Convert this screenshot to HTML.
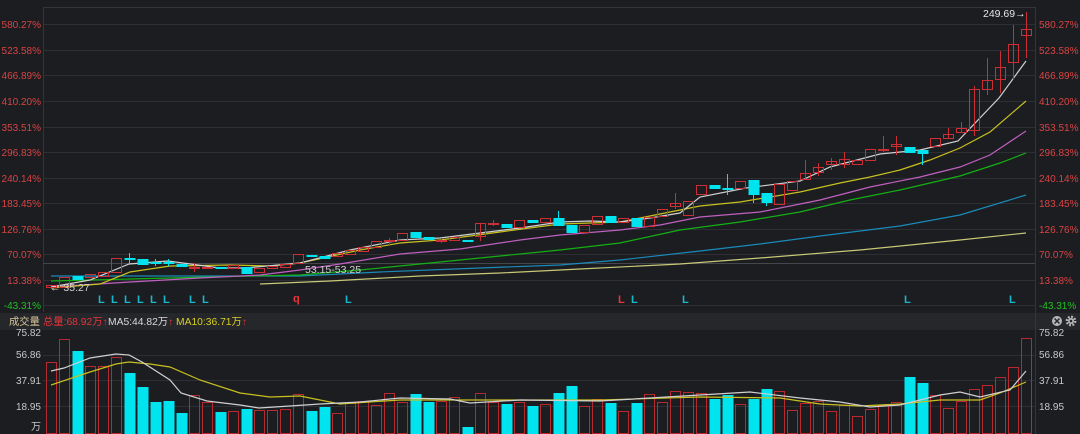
<!DOCTYPE html>
<html><head><meta charset="utf-8"><style>
html,body{margin:0;padding:0;background:#1c1d21;width:1080px;height:434px;overflow:hidden}
svg{display:block}
text{font-family:"Liberation Sans","Noto Sans CJK SC",sans-serif}
</style></head><body>
<svg id="s" width="1080" height="434" xmlns="http://www.w3.org/2000/svg">
<rect width="1080" height="434" fill="#1c1d21"/>
<rect x="0" y="313" width="1080" height="17" fill="#26272b"/>
<g id="grid" stroke="#2e2f34" stroke-width="1"></g>
<line x1="43.5" y1="7" x2="43.5" y2="312" stroke="#34353a"/>
<line x1="1035.5" y1="7" x2="1035.5" y2="434" stroke="#34353a"/>
<line x1="43" y1="7.5" x2="1036" y2="7.5" stroke="#34353a"/>
<line x1="43" y1="263.5" x2="1035" y2="263.5" stroke="#45464b"/>
<g id="labels" font-size="10"></g>
<g id="ma" fill="none" stroke-width="1.2"></g>
<g id="candles"></g>
<g id="vol"></g>
<g id="vma" fill="none" stroke-width="1.2"></g>
<text x="983" y="17" font-size="10.5" fill="#e6e6e6">249.69→</text>
<text x="305" y="273" font-size="10.5" fill="#d0d0d0">53.15-53.25</text>
<text x="50" y="291" font-size="10.5" fill="#d0d0d0">← 35.27</text>
<g font-size="11" font-weight="bold">
<text x="98" y="303" fill="#17b8d0">L</text><text x="111" y="303" fill="#17b8d0">L</text><text x="124" y="303" fill="#17b8d0">L</text><text x="137" y="303" fill="#17b8d0">L</text><text x="150" y="303" fill="#17b8d0">L</text><text x="163" y="303" fill="#17b8d0">L</text><text x="189" y="303" fill="#17b8d0">L</text><text x="202" y="303" fill="#17b8d0">L</text>
<text x="293" y="302" fill="#e8343b">q</text><text x="345" y="303" fill="#17b8d0">L</text><text x="618" y="303" fill="#e8343b">L</text><text x="631" y="303" fill="#17b8d0">L</text><text x="682" y="303" fill="#17b8d0">L</text><text x="904" y="303" fill="#17b8d0">L</text><text x="1009" y="303" fill="#17b8d0">L</text>
</g>
<g font-size="10.3">
<text x="9" y="325" fill="#d8c89a">成交量</text>
<text x="43" y="325" fill="#e8343b">总量:68.92万↑</text>
<text x="108" y="325" fill="#d8d8d8">MA5:44.82万<tspan fill="#e8343b">↑</tspan></text>
<text x="176" y="325" fill="#d8d020">MA10:36.71万<tspan fill="#e8343b">↑</tspan></text>
</g>
<circle cx="1057" cy="321" r="5" fill="#b8b8b8"/><path d="M1054.5 318.5l5 5M1059.5 318.5l-5 5" stroke="#26272b" stroke-width="1.5"/>
<circle cx="1071" cy="321" r="4.2" fill="none" stroke="#b8b8b8" stroke-width="2.4" stroke-dasharray="1.8 1.5"/><circle cx="1071" cy="321" r="3" fill="#b8b8b8"/><circle cx="1071" cy="321" r="1.3" fill="#26272b"/>
</svg>
<script>
var NS="http://www.w3.org/2000/svg";
function el(p,t,a){var e=document.createElementNS(NS,t);for(var k in a)e.setAttribute(k,a[k]);p.appendChild(e);return e;}
var grid=document.getElementById('grid'),lab=document.getElementById('labels');
var gl=["580.27%","523.58%","466.89%","410.20%","353.51%","296.83%","240.14%","183.45%","126.76%","70.07%","13.38%","-43.31%"];
var ly=[24,50,75,101,127,152,178,203,229,254,280,305];
for(var i=0;i<ly.length;i++){
  el(grid,'line',{x1:43,x2:1035,y1:ly[i]+.5,y2:ly[i]+.5});
  var t=gl[i], c=(t=="-43.31%")?"#20c020":"#d84444";
  var a=el(lab,'text',{x:41,y:ly[i]+4,'text-anchor':'end',fill:c});a.textContent=t;
  var b=el(lab,'text',{x:1039,y:ly[i]+4,fill:c});b.textContent=t;
}
[355,380,406].forEach(function(y){el(grid,'line',{x1:43,x2:1035,y1:y+.5,y2:y+.5});});
var vl=[["75.82",336],["56.86",358],["37.91",384],["18.95",410],["万",430]];
vl.forEach(function(v){var a=el(lab,'text',{x:41,y:v[1],'text-anchor':'end',fill:'#c8c8c8'});a.textContent=v[0];
 if(v[0]!="万"){var b=el(lab,'text',{x:1039,y:v[1],fill:'#c8c8c8'});b.textContent=v[0];}});
var ma=document.getElementById('ma');
function pl(g,pts,c){el(g,'polyline',{points:pts.map(function(p){return p.join(',')}).join(' '),stroke:c});}
pl(ma,[[260,284],[330,281],[420,276],[500,273],[580,269],[680,264],[760,258],[860,250],[960,240],[1026,233]],"#c8c878");
pl(ma,[[51,276],[200,276],[300,276],[380,272],[480,268],[560,265],[620,260],[700,251],[760,244],[820,236],[900,226],[960,215],[1026,195]],"#1a8ab8");
pl(ma,[[51,281],[130,279],[250,276],[300,275],[360,270],[420,264],[480,258],[560,250],[620,243],[680,230],[740,222],[800,212],[850,200],[900,190],[960,176],[1000,163],[1026,153]],"#14b014");
pl(ma,[[51,287],[130,282],[200,278],[260,275],[300,270],[340,264],[400,254],[460,249],[520,240],[560,235],[620,230],[660,225],[700,217],[760,212],[820,200],[870,187],[920,177],[960,167],[990,155],[1026,131]],"#c060c0");
pl(ma,[[51,288],[100,284],[130,272],[170,266],[230,265],[270,266],[300,263],[360,250],[400,243],[440,240],[500,232],[560,224],[620,222],[660,214],[700,206],[740,202],[800,192],[840,183],[870,177],[900,170],[930,160],[960,148],[990,132],[1026,101]],"#c8c020");
pl(ma,[[51,287],[90,280],[129,264],[168,261],[220,268],[245,268],[300,263],[350,250],[400,240],[440,238],[480,233],[520,228],[560,222],[590,221],[620,222],[650,218],[680,213],[700,197],[746,188],[800,181],[830,167],[880,154],[920,150],[958,141],[999,98],[1026,61]],"#d0d0d0");
var C=[[285,287,'r'],[277,287,'r'],[276,279,'c'],[274,277,'r'],[272,276,'r'],[258,272,'r'],[258,259,'c',253,263],[259,264,'c'],[262,263,'c',259,266],[262,263,'c',259,266],[264,266,'c'],[267,268,'r',263,272],[267,268,'r'],[267,268,'c'],[265,268,'r'],[267,273,'c'],[268,272,'r'],[266,268,'r'],[264,267,'r'],[254,263,'r'],[255,256,'c'],[256,258,'c'],[253,256,'r'],[250,254,'r'],
[247,251,'r'],[241,247,'r'],[240,241,'r',238,245],[233,240,'r'],[232,237,'c'],[237,239,'c'],[240,241,'r',238,243],[237,240,'r'],[240,241,'c'],[223,236,'r',223,241],[223,224,'r',220,226],[224,227,'c'],[220,227,'r'],[220,222,'c'],[218,222,'r'],[218,225,'c',211,225],[225,232,'c'],[225,232,'r'],[216,224,'r'],[216,222,'c'],[218,222,'r'],[218,226,'c'],[217,226,'r'],[209,216,'r'],[203,206,'r',193,209],[201,215,'r'],[185,194,'r'],[185,188,'c'],
[188,189,'c',174,195],[181,188,'r'],[180,194,'c',180,203],[193,202,'c',193,206],[184,204,'r'],[181,190,'r'],[173,179,'r',160,179],[167,172,'r',163,176],[161,164,'r',158,170],[159,164,'r',152,168],[160,164,'r'],[149,160,'r'],[149,150,'r',136,152],[144,146,'r',136,155],[147,152,'c'],[150,153,'c',150,165],[138,146,'r'],[134,138,'r',128,138],[128,132,'r',122,132],[89,130,'r',86,136],[80,89,'r',58,95],[67,79,'r',51,93],[44,62,'r',25,79],[29,35,'r',12,58]];
var cg=document.getElementById('candles');
var RED="#cc2e36",CY="#00e4f0";
C.forEach(function(d,i){var x=51+13*i;var col=d[2]=='r'?RED:CY;
 var wt=d[3]||d[0],wb=d[4]||d[1];
 if(wt<d[0]||wb>d[1])el(cg,'line',{x1:x+.5,x2:x+.5,y1:wt,y2:wb,stroke:col});
 var h=Math.max(1,d[1]-d[0]);
 if(d[2]=='r')el(cg,'rect',{x:x-4.5,y:d[0]+.5,width:10,height:h,fill:'none',stroke:col});
 else el(cg,'rect',{x:x-4.5,y:d[0],width:11,height:h+1,fill:col});
});
var V=[[362,'r'],[339,'r'],[351,'c'],[366,'r'],[366,'r'],[357,'r'],[373,'c'],[387,'c'],[402,'c'],[401,'c'],[413,'c'],[395,'r'],[402,'r'],[412,'c'],[411,'r'],[409,'c'],[410,'r'],[410,'r'],[409,'r'],[394,'r'],[411,'c'],[407,'c'],[413,'r'],[403,'r'],
[401,'r'],[405,'r'],[393,'r'],[402,'r'],[394,'c'],[402,'c'],[401,'r'],[397,'r'],[427,'c'],[393,'r'],[402,'r'],[404,'c'],[402,'r'],[406,'c'],[404,'r'],[393,'c'],[386,'c'],[406,'r'],[399,'r'],[403,'c'],[411,'r'],[403,'c'],[394,'r'],[402,'r'],[391,'r'],[392,'r'],[393,'r'],[399,'c'],[395,'c'],[404,'r'],[399,'c'],[389,'c'],[391,'r'],[410,'r'],[403,'r'],[401,'r'],[411,'r'],[405,'r'],[416,'r'],[409,'r'],[405,'r'],[402,'r'],[377,'c'],[383,'c'],[395,'r'],[408,'r'],[401,'r'],[389,'r'],[385,'r'],[377,'r'],[367,'r'],[338,'r']];
var vg=document.getElementById('vol');
V.forEach(function(d,i){var x=51+13*i;
 if(d[1]=='r')el(vg,'rect',{x:x-4.5,y:d[0]+.5,width:10,height:433-d[0],fill:'none',stroke:'#b8282f'});
 else el(vg,'rect',{x:x-4.5,y:d[0],width:11,height:434-d[0],fill:CY});
});
var vm=document.getElementById('vma');
pl(vm,[[51,385],[90,372],[116,364],[129,362],[150,364],[170,367],[200,380],[240,393],[270,397],[300,396],[340,404],[400,400],[460,400],[520,400],[600,400],[700,397],[780,398],[820,404],[860,406],[900,404],[940,400],[980,400],[1000,393],[1026,382]],"#c8c020");
pl(vm,[[51,371],[64,368],[90,358],[116,354],[129,355],[142,362],[170,380],[181,393],[207,401],[240,405],[259,408],[290,406],[320,404],[360,402],[400,398],[450,399],[470,403],[520,400],[600,401],[650,398],[700,395],[750,392],[800,398],[840,402],[870,407],[900,405],[940,395],[960,392],[980,397],[1010,390],[1026,371]],"#d0d0d0");
</script>
</body></html>
